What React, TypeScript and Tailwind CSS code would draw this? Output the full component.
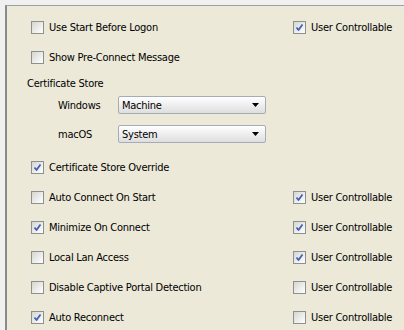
import React from 'react';

const font = { fontFamily: '"DejaVu Sans Condensed", "DejaVu Sans", sans-serif' };

const Box: React.FC<{ checked?: boolean }> = ({ checked }) => (
  <span className="relative inline-block w-[13px] h-[13px] shrink-0 border border-[#8e8f8f] bg-gradient-to-br from-[#d6d6d0] to-white">
    {checked && (
      <svg className="absolute left-[1px] top-[1px]" width="9" height="9" viewBox="0 0 9 9">
        <path d="M1.5 4.5 L3.5 7 L7.5 1.5" fill="none" stroke="#4060b8" strokeWidth="1.8" strokeLinejoin="round" />
      </svg>
    )}
  </span>
);

const Check: React.FC<{ label: string; checked?: boolean }> = ({ label, checked }) => (
  <div className="flex items-center gap-[5px]">
    <Box checked={checked} />
    <span className="text-[11px] text-black leading-none tracking-[-0.25px]">{label}</span>
  </div>
);

const Row: React.FC<{ label: string; checked?: boolean; uc?: boolean; ucChecked?: boolean; className?: string }> = ({
  label,
  checked,
  uc,
  ucChecked,
  className = '',
}) => (
  <div className={`h-[30px] flex items-center ${className}`}>
    <div className="w-[286px] pl-[24px]">
      <Check label={label} checked={checked} />
    </div>
    {uc && <Check label="User Controllable" checked={ucChecked} />}
  </div>
);

const Select: React.FC<{ value: string }> = ({ value }) => (
  <div className="w-[148px] h-[18px] border border-[#a5acb5] rounded-[2px] bg-gradient-to-b from-white to-[#dedede] flex items-center justify-between pl-[3px] pr-[6px]">
    <span className="text-[11px] leading-none text-black tracking-[-0.25px]">{value}</span>
    <svg width="7" height="4" viewBox="0 0 7 4">
      <path d="M0 0 H7 L3.5 4 Z" fill="#000" />
    </svg>
  </div>
);

export default function App() {
  return (
    <div className="w-[404px] h-[330px] overflow-hidden bg-[#f0f0f0] pt-[5px] pl-[5px]" style={font}>
      <div className="h-full border-t border-l-2 border-t-[#a0a0a0] border-l-[#8a8a8a] bg-[#ece9d8] pt-[6px]">
        <Row label="Use Start Before Logon" uc ucChecked />
        <Row label="Show Pre-Connect Message" />
        <div className="h-[22px] flex items-center pl-[20px] text-[11px] leading-none tracking-[-0.25px]">Certificate Store</div>
        <div className="h-[22px] flex items-center">
          <span className="w-[111px] pl-[51px] text-[11px] leading-none tracking-[-0.25px]">Windows</span>
          <Select value="Machine" />
        </div>
        <div className="h-[22px] flex items-center mt-[7px]">
          <span className="w-[111px] pl-[51px] text-[11px] leading-none tracking-[-0.25px]">macOS</span>
          <Select value="System" />
        </div>
        <Row label="Certificate Store Override" checked className="mt-[7px]" />
        <Row label="Auto Connect On Start" uc ucChecked />
        <Row label="Minimize On Connect" checked uc ucChecked />
        <Row label="Local Lan Access" uc ucChecked />
        <Row label="Disable Captive Portal Detection" uc />
        <Row label="Auto Reconnect" checked uc />
      </div>
    </div>
  );
}
